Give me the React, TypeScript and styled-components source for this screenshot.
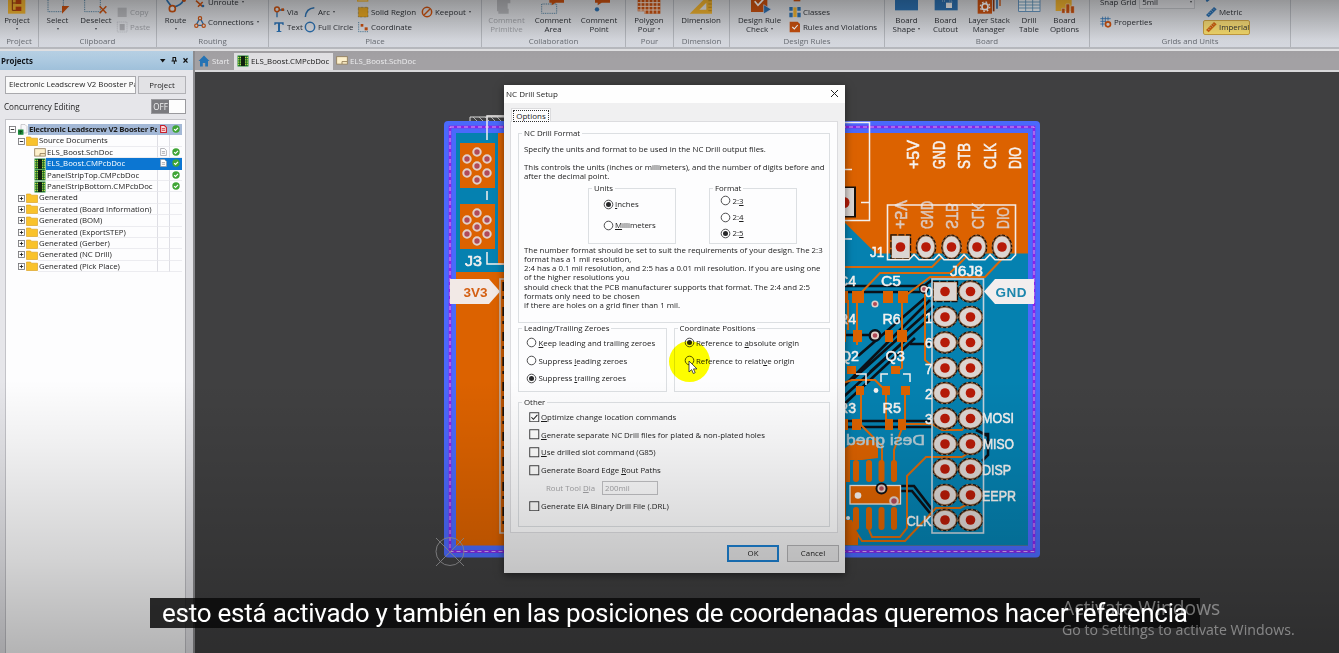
import React from "react";
import styled, { createGlobalStyle, css } from "styled-components";

const Global = createGlobalStyle`
  * { box-sizing: border-box; }
  html, body { margin: 0; padding: 0; overflow: hidden; background: #3a3a3a; }
  body { font-family: "Open Sans", "Noto Sans", sans-serif; font-size: 7.8px; color: #1c1c1c; }
  svg { display: block; flex: none; }
  u { text-underline-offset: 1px; text-decoration-thickness: 1px; }
`;

const Screen = styled.div`
  position: relative;
  display: flex;
  flex-direction: column;
  width: 1339px;
  height: 653px;
  overflow: hidden;
`;

/* ---------- ribbon ---------- */

const RibbonBar = styled.div`
  display: flex;
  height: 51px;
  flex: none;
  font-size: 7.9px;
  background: linear-gradient(#d6d7da 0, #d9dce3 47px, #b9bbc0 47px, #b9bbc0 49px, #e2e2e4 49px, #e2e2e4 51px);
`;

const Group = styled.div<{ $w: number }>`
  display: flex;
  flex-direction: column;
  width: ${(p) => p.$w}px;
  height: 47px;
  border-right: 1px solid #b3b6bc;
`;

const GroupBody = styled.div<{ $pad?: number }>`
  display: flex;
  align-items: flex-end;
  height: 35px;
  overflow: hidden;
  padding-left: ${(p) => p.$pad ?? 0}px;
`;

const GroupLabel = styled.div`
  height: 12px;
  line-height: 12px;
  text-align: center;
  color: #696d74;
  white-space: nowrap;
`;

const BigButton = styled.div<{ $w: number; $off?: boolean }>`
  display: flex;
  flex-direction: column;
  align-items: center;
  flex: none;
  width: ${(p) => p.$w}px;
  height: 35px;
  line-height: 9px;
  text-align: center;
  white-space: nowrap;
  color: ${(p) => (p.$off ? "#9b9da2" : "#2c2f34")};
  svg + span { margin-top: 2px; }
`;

const SmallColumn = styled.div<{ $w: number; $row?: number; $below?: number }>`
  display: flex;
  flex-direction: column;
  flex: none;
  width: ${(p) => p.$w}px;
  padding-bottom: ${(p) => p.$below ?? 0}px;
  > * { height: ${(p) => p.$row ?? 15.5}px; }
`;

const SmallItem = styled.div<{ $off?: boolean; $on?: boolean }>`
  display: flex;
  align-items: center;
  gap: 2px;
  flex: none;
  white-space: nowrap;
  color: ${(p) => (p.$off ? "#9b9da2" : "#2c2f34")};
  ${(p) =>
    p.$on &&
    css`
      width: 47px;
      margin-left: -2px;
      padding-left: 1px;
      border: 1px solid #c9a043;
      border-radius: 2px;
      background: linear-gradient(#f3d877, #f8dd6c);
    `}
`;

const Caret = styled.i`
  display: inline-block;
  width: 0;
  height: 0;
  margin-left: 3px;
  vertical-align: 2px;
  border: 1.7px solid transparent;
  border-top: 2px solid #44474c;
  border-bottom: 0;
`;

const CaretLine = styled(Caret)`
  display: block;
  margin: 3px 0 0;
`;

const SnapField = styled.div`
  display: flex;
  align-items: center;
  justify-content: space-between;
  width: 56px;
  height: 13px;
  margin-left: 1px;
  padding: 0 2px;
  border: 1px solid #bcbec3;
  background: #dcdde1;
`;

const Art = ({ children }: { children: React.ReactNode }) => (
  <svg width="28" height="14" viewBox="0 0 84 42">{children}</svg>
);
const Mini = ({ children }: { children: React.ReactNode }) => (
  <svg width="12" height="12" viewBox="0 0 36 36">{children}</svg>
);

const OR = "#c8500f";
const BL = "#2c6fae";
const YE = "#edb02f";

const Big = (p: { w: number; icon: React.ReactNode; a: string; b?: string; caret?: boolean; off?: boolean }) => (
  <BigButton $w={p.w} $off={p.off}>
    <Art>{p.icon}</Art>
    <span>{p.a}</span>
    {p.b ? <span>{p.b}{p.caret && <Caret />}</span> : <CaretLine />}
  </BigButton>
);

const Small = (p: { icon: React.ReactNode; text: string; caret?: boolean; off?: boolean; on?: boolean }) => (
  <SmallItem $off={p.off} $on={p.on}>
    <Mini>{p.icon}</Mini>
    <span>{p.text}{p.caret && <Caret />}</span>
  </SmallItem>
);

const dotted = { fill: "none", stroke: "#3f7396", strokeWidth: 2.6, strokeDasharray: "3 2.4" };

const Ruler = ({ c }: { c: string }) => (
  <g>
    <path d="M3 27 L27 3 L35 10 L11 34 Z" fill={c} />
    <path d="M9 23 l4 4 M14 18 l3 3 M19 13 l4 4 M24 8 l3 3" stroke="#eee" strokeWidth="1.6" />
  </g>
);

const Ribbon = () => (
  <RibbonBar>
    <Group $w={39}>
      <GroupBody>
        <Big w={34} a="Project" icon={<>
          <rect x="15" y="-10" width="52" height="51" fill={YE} />
          <path d="M28 0v31h12M28 9h12" fill="none" stroke="#8d3410" strokeWidth="3" />
          <rect x="38" y="0" width="17" height="12" fill="#b9420e" /><rect x="38" y="20" width="17" height="13" fill="#b9420e" />
        </>} />
      </GroupBody>
      <GroupLabel>Project</GroupLabel>
    </Group>
    <Group $w={118}>
      <GroupBody>
        <Big w={37} a="Select" icon={<>
          <path d="M12 0V35H58V0" {...dotted} /><path d="M54 18H76L54 41Z" fill={OR} />
        </>} />
        <Big w={40} a="Deselect" icon={<>
          <path d="M8 0V35H55V0" {...dotted} /><path d="M53 19L73 40M73 19L53 40" stroke={OR} strokeWidth="4.5" />
        </>} />
        <SmallColumn $w={38}>
          <Small off text="Copy" icon={<><rect x="5" y="5" width="27" height="28" fill="#b4b5b9" /></>} />
          <Small off text="Paste" icon={<><rect x="4" y="3" width="29" height="30" fill="none" stroke="#a9abb0" strokeWidth="2" strokeDasharray="3 3" /><rect x="11" y="9" width="15" height="19" fill="#aaabb0" /></>} />
        </SmallColumn>
      </GroupBody>
      <GroupLabel>Clipboard</GroupLabel>
    </Group>
    <Group $w={112}>
      <GroupBody>
        <Big w={37} a="Route" icon={<>
          <path d="M14 0L30 22Q60 16 64 0" fill="none" stroke={BL} strokeWidth="5" />
          <circle cx="31" cy="26" r="9" fill="#e5e6ea" stroke={OR} strokeWidth="5" /><circle cx="66" cy="0" r="6" fill={OR} />
        </>} />
        <SmallColumn $w={74} $row={20} $below={3}>
          <Small caret text="Unroute" icon={<><path d="M6 14L26 32M26 18L12 32" stroke={OR} strokeWidth="4.5" /><circle cx="27" cy="30" r="4" fill={BL} /></>} />
          <Small caret text="Connections" icon={<>
            <path d="M18 6L6 28H30Z" fill="none" stroke={BL} strokeWidth="4" />
            <circle cx="18" cy="7" r="5" fill="#ddd" stroke={OR} strokeWidth="3.5" /><circle cx="7" cy="29" r="5" fill="#ddd" stroke={OR} strokeWidth="3.5" /><circle cx="29" cy="29" r="5" fill="#ddd" stroke={OR} strokeWidth="3.5" />
          </>} />
        </SmallColumn>
      </GroupBody>
      <GroupLabel>Routing</GroupLabel>
    </Group>
    <Group $w={213}>
      <GroupBody $pad={4}>
        <SmallColumn $w={31}>
          <Small text="Via" icon={<><path d="M12 12V34M12 12H34" stroke={BL} strokeWidth="4" /><circle cx="12" cy="10" r="7" fill="#ddd" stroke={OR} strokeWidth="4.5" /><rect x="25" y="7" width="8" height="8" fill={OR} /></>} />
          <Small text="Text" icon={<path d="M4 4H32V12H29L27 8H21V30H25V33H11V30H15V8H9L7 12H4Z" fill={BL} />} />
        </SmallColumn>
        <SmallColumn $w={53}>
          <Small caret text="Arc" icon={<path d="M4 33Q6 7 31 5" fill="none" stroke={BL} strokeWidth="4.5" />} />
          <Small text="Full Circle" icon={<circle cx="18" cy="18" r="14" fill="none" stroke={BL} strokeWidth="4.5" />} />
        </SmallColumn>
        <SmallColumn $w={64}>
          <Small text="" icon={<rect x="2" y="12" width="30" height="21" fill="#f1ead8" stroke={YE} strokeWidth="4" />} />
          <Small text="Solid Region" icon={<rect x="4" y="4" width="29" height="29" fill="#e5a623" stroke="#6a5a2b" strokeWidth="2" strokeDasharray="2 2" />} />
          <Small text="Coordinate" icon={<><path d="M5 3V32H34" {...dotted} /><rect x="11" y="9" width="8" height="8" fill={OR} /><rect x="23" y="19" width="9" height="9" fill={OR} /></>} />
        </SmallColumn>
        <SmallColumn $w={58}>
          <Small caret text="Keepout" icon={<><circle cx="18" cy="18" r="14" fill="none" stroke={OR} strokeWidth="4.5" /><path d="M9 27L27 9" stroke={OR} strokeWidth="4.5" /></>} />
          <SmallItem />
        </SmallColumn>
      </GroupBody>
      <GroupLabel>Place</GroupLabel>
    </Group>
    <Group $w={144}>
      <GroupBody>
        <Big off w={49} a="Comment" b="Primitive" icon={<path d="M12 0H52V10H44V26H47V41H16V34H12Z" fill="#b0b1b5" />} />
        <Big w={44} a="Comment" b="Area" icon={<><path d="M8 12V40H53V12H8" {...dotted} /><path d="M31 0H75V8H50L38 16V8H31Z" fill={OR} /></>} />
        <Big w={48} a="Comment" b="Point" icon={<><path d="M30 0H75V8H50L38 16V8H30Z" fill={OR} /><circle cx="36" cy="28" r="6.5" fill={BL} /></>} />
      </GroupBody>
      <GroupLabel>Collaboration</GroupLabel>
    </Group>
    <Group $w={48}>
      <GroupBody>
        <Big caret w={46} a="Polygon" b="Pour" icon={<>
          <path d="M8 -5H76V41H28V34H8Z" fill={OR} />
          <path d="M8 8H76M8 19H76M8 30H76M18 0V34M30 0V41M42 0V41M54 0V41M66 0V41" stroke="#f4dccc" strokeWidth="3" />
        </>} />
      </GroupBody>
      <GroupLabel>Pour</GroupLabel>
    </Group>
    <Group $w={56}>
      <GroupBody>
        <Big w={54} a="Dimension" icon={<>
          <path d="M8 41L75 -26V41Z" fill={YE} /><path d="M37 29L58 8V29Z" fill="#e4e4e6" />
          <path d="M64 2h10M64 12h10M64 22h10M64 32h10" stroke="#a87818" strokeWidth="2" />
        </>} />
      </GroupBody>
      <GroupLabel>Dimension</GroupLabel>
    </Group>
    <Group $w={155}>
      <GroupBody>
        <Big caret w={59} a="Design Rule" b="Check" icon={<>
          <rect x="15" y="-5" width="49" height="41" fill={OR} /><path d="M26 4L36 16L54 -4" fill="none" stroke="#fff" strokeWidth="5" />
          <path d="M53 14L76 28L53 42Z" fill={BL} stroke="#dde" strokeWidth="2" />
        </>} />
        <SmallColumn $w={90}>
          <SmallItem><Mini><rect x="14" y="14" width="20" height="20" fill={OR} /></Mini></SmallItem>
          <Small text="Classes" icon={<><path d="M1 3H11V14H1ZM1 20H11V34H1ZM25 3H35V14H25ZM25 20H35V34H25Z" fill={BL} /><rect x="13" y="4" width="10" height="29" fill={YE} /></>} />
          <Small text="Rules and Violations" icon={<><path d="M2 2H26L33 9V34H2Z" fill={OR} /><path d="M10 18L16 24L26 12" fill="none" stroke="#fff" strokeWidth="3.5" /></>} />
        </SmallColumn>
      </GroupBody>
      <GroupLabel>Design Rules</GroupLabel>
    </Group>
    <Group $w={205}>
      <GroupBody $pad={1}>
        <Big caret w={41} a="Board" b="Shape" icon={<rect x="6" y="-5" width="69" height="36" fill={BL} />} />
        <Big w={37} a="Board" b="Cutout" icon={<><rect x="8" y="-5" width="69" height="36" fill={BL} /><path d="M42 8H60V24H42Z" fill="#eee" /><path d="M30 3H40M52 3H60V8" stroke="#eee" strokeWidth="2" strokeDasharray="3 3" fill="none" /></>} />
        <Big w={50} a="Layer Stack" b="Manager" icon={<>
          <rect x="8" y="-5" width="43" height="46" fill={OR} /><circle cx="30" cy="20" r="9" fill="none" stroke="#fff" strokeWidth="5" /><circle cx="30" cy="20" r="14" fill="none" stroke="#fff" strokeWidth="4" strokeDasharray="5 6" />
          <path d="M56 0V34" stroke="#8d3410" strokeWidth="5" /><path d="M66 0V26" stroke={BL} strokeWidth="5" /><path d="M75 0V18" stroke={OR} strokeWidth="4" />
        </>} />
        <Big w={30} a="Drill" b="Table" icon={<>
          <rect x="11" y="-5" width="64" height="39" fill="#eef3f7" stroke={BL} strokeWidth="2" /><path d="M11 6H75M11 15H75M11 24H75M32 0V34M53 0V34" stroke="#5d93b8" strokeWidth="2.5" />
        </>} />
        <Big w={41} a="Board" b="Options" icon={<>
          <path d="M14 -5H62V33H14Z" fill={YE} /><path d="M32 40V25H42V40ZM45 40V12H56V40ZM59 40V18H70V40Z" fill={OR} stroke="#eee" strokeWidth="1.5" />
        </>} />
      </GroupBody>
      <GroupLabel>Board</GroupLabel>
    </Group>
    <Group $w={201}>
      <GroupBody $pad={10}>
        <SmallColumn $w={105} $row={20} $below={3}>
          <SmallItem><span>Snap Grid</span><SnapField>5mil<Caret /></SnapField></SmallItem>
          <Small text="Properties" icon={<><path d="M8 2V32M16 2V20M24 2V14M1 8H32M1 16H18M1 24H14" stroke={BL} strokeWidth="2.4" /><circle cx="24" cy="25" r="7.5" fill="#ddd" stroke={OR} strokeWidth="5" /></>} />
        </SmallColumn>
        <SmallColumn $w={60}>
          <SmallItem><Mini><path d="M4 34L14 26" stroke={BL} strokeWidth="6" /></Mini></SmallItem>
          <Small text="Metric" icon={<Ruler c={BL} />} />
          <Small on text="Imperial" icon={<Ruler c="#d2640f" />} />
        </SmallColumn>
      </GroupBody>
      <GroupLabel>Grids and Units</GroupLabel>
    </Group>
  </RibbonBar>
);

/* ---------- projects panel ---------- */

const Workspace = styled.div`
  display: flex;
  flex: 1;
  min-height: 0;
`;

const Panel = styled.div`
  display: flex;
  flex-direction: column;
  width: 195px;
  flex: none;
  background: #e6e6ea;
  border-right: 2px solid #8d8d90;
`;

const PanelHead = styled.div`
  display: flex;
  align-items: center;
  height: 19px;
  flex: none;
  padding: 0 3px 0 1px;
  background: linear-gradient(#b9d2e6, #9fc0da);
  font-weight: 700;
  font-size: 7.9px;
  color: #10151c;
  svg { margin-left: auto; }
`;

const PickRow = styled.div`
  display: flex;
  justify-content: space-between;
  margin: 6px 7px 0 5px;
`;

const PickField = styled.div`
  width: 131px;
  height: 18px;
  padding-left: 3px;
  border: 1px solid #a9a9ad;
  background: #fafafa;
  line-height: 15px;
  white-space: nowrap;
  overflow: hidden;
`;

const PickButton = styled.div`
  width: 48px;
  height: 18px;
  border: 1px solid #b2b2b6;
  background: #e2e2e5;
  line-height: 16px;
  text-align: center;
`;

const ToggleRow = styled.div`
  display: flex;
  align-items: center;
  justify-content: space-between;
  height: 15px;
  margin: 5px 7px 0 4px;
  font-size: 8.1px;
`;

const Toggle = styled.div`
  display: flex;
  width: 35px;
  height: 15px;
  border: 1px solid #9a9a9e;
  background: #fdfdfd;
  span { width: 17px; background: #7b7b7f; color: #f2f2f2; text-align: center; line-height: 13px; }
`;

const Tree = styled.div`
  flex: 1;
  margin: 5px 7px 0 5px;
  padding: 4px 3px 0 2px;
  border: 1px solid #c3c3c8;
  border-bottom: 0;
  background: #fdfdfe;
`;

const TreeRow = styled.div<{ $indent: number }>`
  display: flex;
  align-items: center;
  height: 11.4px;
  padding-left: ${(p) => p.$indent}px;
  white-space: nowrap;
`;

const TreeName = styled.div<{ $tone?: "root" | "selected" }>`
  flex: 1;
  min-width: 0;
  height: 100%;
  line-height: 11px;
  padding-left: 1px;
  overflow: hidden;
  border-bottom: 1px solid #ececf0;
  ${(p) => p.$tone === "root" && css`background: #a3b8d6; font-weight: 700; letter-spacing: -0.22px; border-color: #a3b8d6;`}
  ${(p) => p.$tone === "selected" && css`background: #0c76d2; color: #fff; border-color: #0c76d2;`}
`;

const TreeCell = styled.div<{ $tone?: "root" | "selected" }>`
  display: flex;
  align-items: center;
  justify-content: center;
  width: 12.6px;
  height: 100%;
  flex: none;
  border-left: 1px solid #dedee4;
  border-bottom: 1px solid #ececf0;
  ${(p) => p.$tone === "root" && css`background: #a3b8d6; border-color: #a3b8d6;`}
  ${(p) => p.$tone === "selected" && css`background: #0c76d2; border-color: #0c76d2;`}
`;

const Expander = ({ open }: { open?: boolean }) => (
  <svg width="9" height="9" viewBox="0 0 9 9">
    <rect x="1.5" y="1.5" width="6" height="6" fill="#fff" stroke="#6e6e72" strokeWidth=".8" />
    <path d={open ? "M2.8 4.5h3.4" : "M2.8 4.5h3.4M4.5 2.8v3.4"} stroke="#222" strokeWidth=".9" />
  </svg>
);
const Folder = () => (
  <svg width="12" height="10" viewBox="0 0 12 10"><path d="M.5 1H4.5L5.5 2.2H11.5V9.5H.5Z" fill="#f9c22b" stroke="#d69a18" strokeWidth=".6" /></svg>
);
const PcbIcon = () => (
  <svg width="12" height="12" viewBox="0 0 12 12">
    <rect x=".5" y=".5" width="11" height="11" fill="#2a8a35" />
    <path d="M1 2.5H11M1 4.8H11M1 7.1H11M1 9.4H11" stroke="#cde04a" strokeWidth="1" />
    <path d="M2.6 1V11M9.4 1V11" stroke="#14501c" strokeWidth=".7" /><rect x="4" y="1" width="4" height="10" fill="#10200f" />
  </svg>
);
const SchIcon = () => (
  <svg width="12" height="9" viewBox="0 0 12 9"><rect x=".7" y=".7" width="10.6" height="7.4" fill="#fdf0cb" stroke="#8f7b55" strokeWidth=".8" /><path d="M6 8V5.6H11" fill="none" stroke="#8f7b55" strokeWidth=".9" /></svg>
);
const RootIcon = () => (
  <svg width="11" height="11" viewBox="0 0 11 11"><path d="M4 .5H8L10 2.5V9H4Z" fill="#f7f7f9" stroke="#b0b0b5" strokeWidth=".6" /><path d="M1 5.5H6.5V10.8H1Z" fill="#1d8a3c" /><path d="M3.7 10V7M2.3 8.2L3.7 6.6L5.2 8.2" stroke="#083b14" fill="none" strokeWidth=".8" /></svg>
);
const Tick = () => (
  <svg width="8" height="8" viewBox="0 0 8 8"><circle cx="4" cy="4" r="3.7" fill="#3fa535" /><path d="M2.1 4.1L3.5 5.4L6 2.8" fill="none" stroke="#fff" strokeWidth="1.1" /></svg>
);
const Doc = ({ red }: { red?: boolean }) => (
  <svg width="7" height="8" viewBox="0 0 7 8"><path d="M.6 .5H4.4L6.4 2.4V7.5H.6Z" fill={red ? "#fbdcdc" : "#fff"} stroke={red ? "#c8202c" : "#9a9aa0"} strokeWidth={red ? 1.1 : 0.7} /><path d="M1.9 3.6H5M1.9 5.3H5" stroke={red ? "#c8202c" : "#9a9aa0"} strokeWidth=".8" /></svg>
);

type Node = { text: string; kind: "root" | "folder" | "sch" | "pcb"; indent: number; open?: boolean; doc?: boolean; tick?: boolean; tone?: "root" | "selected" };
const nodes: Node[] = [
  { text: "Electronic Leadscrew V2 Booster Pack", kind: "root", indent: 0, open: true, doc: true, tick: true, tone: "root" },
  { text: "Source Documents", kind: "folder", indent: 9, open: true },
  { text: "ELS_Boost.SchDoc", kind: "sch", indent: 26, doc: true, tick: true },
  { text: "ELS_Boost.CMPcbDoc", kind: "pcb", indent: 26, doc: true, tick: true, tone: "selected" },
  { text: "PanelStripTop.CMPcbDoc", kind: "pcb", indent: 26, tick: true },
  { text: "PanelStripBottom.CMPcbDoc", kind: "pcb", indent: 26, tick: true },
  ...["", " (Board Information)", " (BOM)", " (ExportSTEP)", " (Gerber)", " (NC Drill)", " (Pick Place)"].map(
    (s): Node => ({ text: "Generated" + s, kind: "folder", indent: 9 })
  ),
];

const Projects = () => (
  <Panel>
    <PanelHead>
      Projects
      <svg width="31" height="9" viewBox="0 0 31 9">
        <path d="M1 3H6.5L3.7 6.5Z" fill="#111" />
        <path d="M13.5 1.5H17M14 1.5V5M16.6 1.5V5M12.5 5H18M15.3 5V8" stroke="#111" strokeWidth="1.1" fill="none" />
        <path d="M24.5 2.2L28.5 6.6M28.5 2.2L24.5 6.6" stroke="#111" strokeWidth="1.3" />
      </svg>
    </PanelHead>
    <PickRow>
      <PickField>Electronic Leadscrew V2 Booster Pack</PickField>
      <PickButton>Project</PickButton>
    </PickRow>
    <ToggleRow>
      Concurrency Editing
      <Toggle><span>OFF</span></Toggle>
    </ToggleRow>
    <Tree>
      {nodes.map((n) => (
        <TreeRow key={n.text} $indent={n.indent}>
          {(n.kind === "root" || n.kind === "folder") && <Expander open={n.open} />}
          {n.kind === "root" && <RootIcon />}
          {n.kind === "folder" && <Folder />}
          {n.kind === "sch" && <SchIcon />}
          {n.kind === "pcb" && <PcbIcon />}
          <TreeName $tone={n.tone}>{n.text}</TreeName>
          <TreeCell $tone={n.tone}>{n.doc && <Doc red={n.kind === "root"} />}</TreeCell>
          <TreeCell $tone={n.tone}>{n.tick && <Tick />}</TreeCell>
        </TreeRow>
      ))}
    </Tree>
  </Panel>
);

/* ---------- editor ---------- */

const Editor = styled.div`
  display: flex;
  flex-direction: column;
  flex: 1;
  min-width: 0;
`;

const DocTabs = styled.div`
  display: flex;
  height: 21px;
  flex: none;
  padding-top: 2px;
  background: #a3a1a4;
  border-bottom: 2px solid #d8d8da;
`;

const DocTab = styled.div<{ $active?: boolean; $w: number }>`
  display: flex;
  align-items: center;
  gap: 2px;
  width: ${(p) => p.$w}px;
  padding: 0 0 2px 3px;
  white-space: nowrap;
  background: ${(p) => (p.$active ? "#e1e0e3" : "transparent")};
  color: ${(p) => (p.$active ? "#151515" : "#ececee")};
`;

const Canvas = styled.div`
  position: relative;
  flex: 1;
  background: #404041;
  overflow: hidden;
`;

const ORG = "#dc6200";
const TEAL = "#0581b0";
const PAD = "#dbd5d2";
const RED = "#b61a08";

const OvalPad = ({ x, y, rx, ry }: { x: number; y: number; rx: number; ry: number }) => (
  <g>
    <ellipse cx={x} cy={y} rx={rx + 1} ry={ry + 1} fill="#17100c" />
    <ellipse cx={x} cy={y} rx={rx + 0.6} ry={ry + 0.6} fill="none" stroke="#d9a070" strokeWidth=".8" strokeDasharray="2 3" />
    <ellipse cx={x} cy={y} rx={rx - 0.5} ry={ry - 0.5} fill={PAD} stroke="#a56a3c" strokeWidth=".7" />
    <circle cx={x} cy={y} r="4.8" fill={RED} />
  </g>
);

const SquarePad = ({ x, y, w, h, cx, cy }: { x: number; y: number; w: number; h: number; cx: number; cy: number }) => (
  <g>
    <rect x={x} y={y} width={w} height={h} fill={PAD} stroke="#b06a34" strokeWidth=".8" />
    <rect x={x - 0.6} y={y - 0.6} width={w + 1.2} height={h + 1.2} fill="none" stroke="#17100c" strokeWidth="1.2" strokeDasharray="6 1.5" />
    <circle cx={cx} cy={cy} r="4.8" fill={RED} />
  </g>
);

const ViaDot = ({ x, y, r = 3.6 }: { x: number; y: number; r?: number }) => (
  <circle cx={x} cy={y} r={r} fill="#b04a58" stroke="#e2cfc8" strokeWidth={r * 0.55} />
);

const Silk = ({ x, y, w, children, fill = "#f6f2f0", size = 15 }: { x: number; y: number; w: number; children: string; fill?: string; size?: number }) => (
  <text x={x} y={y} textLength={w} lengthAdjust="spacingAndGlyphs" fontSize={size} fill={fill} stroke={fill} strokeWidth=".5">{children}</text>
);

const pinY = [291.5, 317, 342.5, 368, 393, 418.5, 444, 469, 495, 520];
const j1 = [900.5, 926, 951.5, 977, 1002];
const j1Names: [string, number][] = [["+5V", 29], ["GND", 28], ["STB", 26], ["CLK", 26], ["DIO", 22]];

const Board = () => (
  <svg width="1144" height="581" viewBox="195 72 1144 581" fontFamily='"Liberation Sans", Arial, sans-serif'>
    <rect x="444" y="121" width="596" height="436.5" rx="4" fill="#4a69fb" />
    <rect x="450" y="127" width="584" height="424.5" fill="none" stroke="#8a23e6" strokeWidth="2.6" />
    <rect x="450" y="127" width="584" height="424.5" fill="none" stroke="#d0a8f4" strokeWidth="1" strokeDasharray="4 3" />
    <rect x="456" y="133" width="572" height="412.5" fill={ORG} />
    <g>
      <path d="M456 133H498V265H510V272H456Z" fill={TEAL} />
      <path d="M460 143H495V188H460ZM460 204H495V249H460Z" fill={ORG} />
      {[0, 61].map((d) => [[477, 152], [467, 159], [487, 159], [477, 166], [467, 173], [487, 173], [477, 180]].map(([x, y]) => (
        <ViaDot key={`${x}-${y}-${d}`} x={x} y={y + d} r={3.7} />
      )))}
      <path d="M487 140V116H510M487 191V200M487 252V264H510" fill="none" stroke="#f3f0ee" strokeWidth="1.5" />
      <path d="M470 121V117H505" fill="none" stroke="#d8d8d8" strokeWidth="1" />
      <path d="M473 117L477 121M479 117L483 121M485 117L489 121M491 117L495 121M497 117L501 121" stroke="#c8c8c8" strokeWidth=".8" />
      <Silk x={465} y={265.5} w={17}>J3</Silk>
      <path d="M450 279H489L500 291.5L489 304H450Z" fill="#f2e9e6" />
      <text x="463.5" y="296.5" textLength="24" fontSize="13.5" fontWeight="700" fill="#d45f12">3V3</text>
      <path d="M508 279H500V533H508" fill="none" stroke="#c9bdb6" strokeWidth="1.6" />
      <path d="M503.2 282V530" stroke="#1b130e" strokeWidth="1.6" strokeDasharray="9 5 3 8" />
    </g>
    <g>
      <path d="M840 218L876 253.5H1028V545.5H840Z" fill={TEAL} />
      <path d="M840 122.5H869.5V220.5H840M861 202.5H869M840 169.5H852M840 239H852" fill="none" stroke="#f3f0ee" strokeWidth="1.5" />
      <rect x="838" y="186.5" width="18" height="31" fill="#17100c" /><rect x="838" y="188" width="16" height="28" fill={PAD} /><circle cx="844" cy="202.5" r="5.5" fill={RED} />

      <g fill="none" stroke="#0b1118" strokeWidth="2.6">
        <path d="M840 286H924L932 280M840 292H920M840 335H875M910 344H933M908 338L840 400M915 338L840 408M930 300L840 390M934 306L852 380M934 314L870 372M925 298L858 356" />
        <path d="M840 421H932M840 427H932M900 486H914L934 512M900 491H912L934 518M984 434H988V455L982 461M976 430L988 436" />
      </g>
      <g fill="none" stroke="#d9690c" strokeWidth="2">
        <path d="M840 267H932L942 257M858 296L880 273H950L966 257M905 296L930 277H985L1002 259" />
        <path d="M857 300V345M902 300V368L895 372M925 288V360L932 366M861 390V425L882 446V462M905 395V420L894 450V462M886 390V420M840 384L852 380H875L886 391M848 300V330" />
        <path d="M900 424H932L942 430H962L968 422M970 452L962 457H926L907 476V528L900 537H872L869 530M970 503L960 508H936L905 541H862L856 532" />
      </g>
      <g fill={ORG}>
        <path d="M852 291H864V303H852ZM883 291H893V303H883ZM898 291H908V303H898ZM840 291H848V303H840ZM853 330H862V342H853ZM885 330H893V342H885ZM897 330H907V342H897ZM840 330H846V342H840Z" />
        <path d="M891 366H900V374H891ZM847 366H856V374H847ZM856 386H864V395H856ZM882 386H890V395H882ZM901 386H910V395H901ZM885 419H893V430H885ZM898 419H906V430H898ZM852 419H861V430H852ZM840 419H848V430H840Z" />
        <path d="M840 452L856 440H874L878 446V458L862 460H850V482H840ZM840 520H852L858 534V545H840ZM840 452H846V545H840Z" />
        <rect x="850" y="485" width="50" height="19" />
        {[856, 869, 881.5, 894].map((x) => <g key={x}><rect x={x - 3} y="460" width="6" height="22" rx="3" /><rect x={x - 3} y="507" width="6" height="23" rx="3" /></g>)}
      </g>
      <rect x="850" y="485.5" width="50.5" height="18.5" fill="none" stroke="#efe6e0" strokeWidth="1.3" />
      <circle cx="858" cy="495.5" r="3.3" fill="#f6f2f0" />
      <circle cx="876" cy="390.5" r="2.4" fill="#f6f2f0" />
      <circle cx="848" cy="518" r="2" fill="#f6f2f0" />
      <circle cx="875" cy="335.5" r="6.5" fill="#0b1118" /><circle cx="881.5" cy="488.5" r="6" fill="#0b1118" /><circle cx="924" cy="289" r="5" fill="#0b1118" />
      <ViaDot x={875} y={304} r={2.8} /><ViaDot x={875} y={335.5} r={3.2} /><ViaDot x={924} y={289} r={2.8} /><ViaDot x={881.5} y={488.5} r={3.2} /><ViaDot x={894} y={501} r={3.8} />
      <path d="M881 382V374H888M903 374H910V382M856 374H866V385" fill="none" stroke="#f3f0ee" strokeWidth="1.5" />

      {j1Names.map(([t, w], i) => (
        <g key={t}>
          <g transform={`translate(${j1[i] + 18.5} 169) rotate(-90)`}><Silk x={0} y={0} w={w} size={16}>{t}</Silk></g>
          <g transform={`translate(${j1[i] - 5.5} 229) scale(-1 1) rotate(-90)`}><Silk x={0} y={0} w={w} size={16} fill="#dcc9bf">{t}</Silk></g>
        </g>
      ))}
      <SquarePad x={891.5} y={235.5} w={18.5} h={23} cx={900.5} cy={247} />
      {j1.slice(1).map((x) => <OvalPad key={x} x={x} y={247} rx={9.3} ry={11.6} />)}
      <path d="M887.5 205H1015.5V255L1011 259.8H995L990 254.5L985 259.8H969L964 254.5L959 259.8H944L939 254.5L934 259.8H919L914 254.5L909 259.8H887.5Z" fill="none" stroke="#f3ece8" strokeWidth="1.6" />

      {pinY.map((y, i) => (
        <g key={y}>
          {i > 0 && <OvalPad x={945} y={y} rx={11.8} ry={10.2} />}
          <OvalPad x={970.5} y={y} rx={11.8} ry={10.2} />
        </g>
      ))}
      <SquarePad x={933.5} y={282} w={23.5} h={19} cx={945} cy={291.5} />
      <rect x="932" y="279" width="51.5" height="254" fill="none" stroke="#c3d2dc" strokeWidth="1.6" />

      <Silk x={870} y={257} w={14}>J1</Silk>
      <Silk x={950} y={276} w={33}>J6J8</Silk>
      <Silk x={881} y={286} w={20}>C5</Silk><Silk x={838} y={286} w={18}>C4</Silk>
      <Silk x={882.5} y={324} w={18}>R6</Silk><Silk x={838} y={324} w={18}>R4</Silk>
      <Silk x={885.5} y={361} w={19.5}>Q3</Silk><Silk x={840} y={361} w={19}>Q2</Silk>
      <Silk x={882.5} y={413} w={18.5}>R5</Silk><Silk x={838} y={413} w={18}>R3</Silk>
      {["0", "1", "6", "7", "2", "3"].map((t, i) => <Silk key={t} x={925} y={pinY[i] + 5.5} w={7.5}>{t}</Silk>)}
      <Silk x={906.5} y={525.5} w={25}>CLK</Silk>
      <Silk x={982} y={423} w={32}>MOSI</Silk><Silk x={983} y={448.5} w={31}>MISO</Silk>
      <Silk x={982} y={474.5} w={29}>DISP</Silk><Silk x={982} y={500.5} w={34}>EEPR</Silk>
      <g transform="translate(925 444.5) scale(-1 1)"><Silk x={0} y={0} w={79} fill="#b5cbd4">Desi gned</Silk></g>
      <path d="M984 291.5L995 279H1034V304H995Z" fill="#f2eeee" />
      <text x="995.5" y="296.5" textLength="31" fontSize="13.5" fontWeight="700" fill="#1c86ad">GND</text>
    </g>
    <g fill="none" stroke="#9a9a9c" strokeWidth=".9"><circle cx="450" cy="551.5" r="14" /><path d="M436 538L464 566M464 538L436 566" /></g>
  </svg>
);

/* ---------- dialog ---------- */

const Dialog = styled.div`
  position: absolute;
  left: 309px;
  top: 13px;
  width: 341px;
  height: 488px;
  display: flex;
  flex-direction: column;
  background: #f0f0f1;
  box-shadow: 0 2px 8px rgba(0, 0, 0, 0.5);
  font-size: 7.85px;
`;

const TitleBar = styled.div`
  display: flex;
  align-items: center;
  justify-content: space-between;
  height: 18px;
  padding: 0 6px 2px 2px;
  background: #fefefe;
  font-size: 8px;
`;

const Tab = styled.div`
  width: 40px;
  height: 14px;
  margin: 5px 0 -1px 7px;
  padding: 1px 1px 0;
  background: #fdfdfe;
  border: 1px solid #dcdcde;
  border-bottom: 0;
  z-index: 1;
  span { display: block; height: 12px; border: 1px dotted #333; line-height: 10px; text-align: center; font-size: 8px; }
`;

const Page = styled.div`
  display: flex;
  flex-direction: column;
  height: 412px;
  margin: 0 7px 0 6px;
  padding: 11px 7px 0;
  border: 1px solid #dcdcdf;
  background: #fdfdfe;
`;

const Box = styled.div<{ $h: number; $w?: number }>`
  display: flex;
  flex-direction: column;
  height: ${(p) => p.$h}px;
  width: ${(p) => (p.$w ? `${p.$w}px` : "auto")};
  border: 1px solid #dcdfe2;
`;

const Legend = styled.div`
  align-self: flex-start;
  height: 9px;
  margin: -5px 0 0 3px;
  padding: 0 2px;
  line-height: 9px;
  background: #fdfdfe;
  white-space: nowrap;
`;

const Para = styled.div<{ $top: number }>`
  margin: ${(p) => p.$top}px 0 0 5px;
  line-height: 9.2px;
  white-space: nowrap;
`;

const Pair = styled.div<{ $top: number; $left?: number; $gap: number }>`
  display: flex;
  gap: ${(p) => p.$gap}px;
  margin: ${(p) => p.$top}px 0 0 ${(p) => p.$left ?? 0}px;
`;

const Choices = styled.div<{ $top: number; $left: number; $step: number }>`
  display: flex;
  flex-direction: column;
  padding: ${(p) => p.$top}px 0 0 ${(p) => p.$left}px;
  > * { height: ${(p) => p.$step}px; }
`;

const Choice = styled.div`
  display: flex;
  align-items: center;
  gap: 1.5px;
  white-space: nowrap;
`;

const RoutRow = styled.div`
  display: flex;
  align-items: center;
  gap: 7px;
  padding-left: 17px;
  color: #a5a5a8;
`;

const RoutField = styled.div`
  width: 56px;
  height: 14px;
  padding-left: 2px;
  line-height: 12px;
  border: 1px solid #c2c2c5;
`;

const Actions = styled.div`
  display: flex;
  justify-content: flex-end;
  gap: 8px;
  margin: 12px 6px 0 0;
`;

const Action = styled.div<{ $main?: boolean }>`
  width: 52px;
  height: 17px;
  line-height: ${(p) => (p.$main ? 13 : 15)}px;
  text-align: center;
  background: #e3e3e4;
  border: ${(p) => (p.$main ? "2px solid #1c80d0" : "1px solid #b0b0b2")};
`;

const Spot = styled.div`
  position: absolute;
  left: 165px;
  top: 256px;
  width: 41px;
  height: 41px;
  border-radius: 50%;
  background: #ffff00;
  mix-blend-mode: multiply;
`;

const Pointer = styled.svg`
  position: absolute;
  left: 184px;
  top: 275px;
`;

const Radio = ({ on, children }: { on?: boolean; children: React.ReactNode }) => (
  <Choice>
    <svg width="11" height="11" viewBox="0 0 11 11"><circle cx="5.5" cy="5.5" r="4.3" fill="#fff" stroke="#3a3a3c" strokeWidth=".9" />{on && <circle cx="5.5" cy="5.5" r="2.5" fill="#28282a" />}</svg>
    <span>{children}</span>
  </Choice>
);
const Check = ({ on, children }: { on?: boolean; children: React.ReactNode }) => (
  <Choice>
    <svg width="10.5" height="10.5" viewBox="0 0 10 10"><rect x=".7" y=".7" width="8.6" height="8.6" fill="#fff" stroke="#3a3a3c" strokeWidth=".9" />{on && <path d="M2.3 5L4.2 7L8 2.800" fill="none" stroke="#222" strokeWidth="1" />}</svg>
    <span>{children}</span>
  </Choice>
);

const DrillDialog = () => (
  <Dialog>
    <TitleBar>
      NC Drill Setup
      <svg width="9" height="9" viewBox="0 0 9 9"><path d="M1 1L8 8M8 1L1 8" stroke="#222" strokeWidth="1" /></svg>
    </TitleBar>
    <Tab><span>Options</span></Tab>
    <Page>
      <Box $h={190}>
        <Legend>NC Drill Format</Legend>
        <Para $top={6.5}>Specify the units and format to be used in the NC Drill output files.</Para>
        <Para $top={9.2}>This controls the units (inches or millimeters), and the number of digits before and<br />after the decimal point.</Para>
        <Pair $top={6.5} $left={69} $gap={33}>
          <Box $h={56} $w={88}>
            <Legend>Units</Legend>
            <Choices $top={1} $left={13.500} $step={21}>
              <Radio on><u>I</u>nches</Radio>
              <Radio><u>M</u>illimeters</Radio>
            </Choices>
          </Box>
          <Box $h={56} $w={88}>
            <Legend>Format</Legend>
            <Choices $top={0} $left={10} $step={16.2}>
              <Radio>2:<u>3</u></Radio>
              <Radio>2:<u>4</u></Radio>
              <Radio on>2:<u>5</u></Radio>
            </Choices>
          </Box>
        </Pair>
        <Para $top={2}>
          The number format should be set to suit the requirements of your design. The 2:3<br />
          format has a 1 mil resolution,<br />
          2:4 has a 0.1 mil resolution, and 2:5 has a 0.01 mil resolution. If you are using one<br />
          of the higher resolutions you<br />
          should check that the PCB manufacturer supports that format. The 2:4 and 2:5<br />
          formats only need to be chosen<br />
          if there are holes on a grid finer than 1 mil.
        </Para>
      </Box>
      <Pair $top={5} $gap={7}>
        <Box $h={64} $w={149}>
          <Legend>Leading/Trailing Zeroes</Legend>
          <Choices $top={1} $left={7} $step={17.8}>
            <Radio><u>K</u>eep leading and trailing zeroes</Radio>
            <Radio>Suppress <u>l</u>eading zeroes</Radio>
            <Radio on>Suppress <u>t</u>railing zeroes</Radio>
          </Choices>
        </Box>
        <Box $h={64} $w={157}>
          <Legend>Coordinate Positions</Legend>
          <Choices $top={1} $left={9} $step={17.8}>
            <Radio on>Reference to <u>a</u>bsolute origin</Radio>
            <Radio>Reference to relati<u>v</u>e origin</Radio>
          </Choices>
        </Box>
      </Pair>
      <Pair $top={10} $gap={0}>
        <Box $h={125} $w={313}>
          <Legend>Other</Legend>
          <Choices $top={1} $left={10} $step={17.8}>
            <Check on><u>O</u>ptimize change location commands</Check>
            <Check><u>G</u>enerate separate NC Drill files for plated &amp; non-plated holes</Check>
            <Check><u>U</u>se drilled slot command (G85)</Check>
            <Check>Generate Board Edge <u>R</u>out Paths</Check>
            <RoutRow><span>Rout Tool <u>D</u>ia</span><RoutField>200mil</RoutField></RoutRow>
            <Check>Generate EIA Binary Drill File (.DRL)</Check>
          </Choices>
        </Box>
      </Pair>
    </Page>
    <Actions>
      <Action $main>OK</Action>
      <Action>Cancel</Action>
    </Actions>
    <Spot />
    <Pointer width="10" height="15" viewBox="0 0 10 15"><path d="M1 1V12L3.6 9.6L5.3 13.5L7.2 12.7L5.5 8.9H9Z" fill="#fff" stroke="#222" strokeWidth=".8" /></Pointer>
  </Dialog>
);

/* ---------- video overlays ---------- */

const Shade = styled.div`
  position: absolute;
  inset: 0;
  pointer-events: none;
  background:
    linear-gradient(rgba(0, 0, 0, 0.3), rgba(0, 0, 0, 0.03) 40px, transparent 60px),
    linear-gradient(transparent 380px, rgba(0, 0, 0, 0.06) 450px, rgba(0, 0, 0, 0.17) 560px, rgba(0, 0, 0, 0.29) 653px);
`;

const Subtitle = styled.div`
  position: absolute;
  left: 150px;
  top: 598px;
  width: 1050px;
  height: 30px;
  padding-left: 12px;
  line-height: 30px;
  background: rgba(8, 8, 8, 0.84);
  color: #fff;
  font-family: Roboto, sans-serif;
  font-size: 26px;
  letter-spacing: -0.24px;
  white-space: nowrap;
`;

const Activation = styled.div`
  position: absolute;
  left: 1062px;
  top: 595px;
  color: rgba(255, 255, 255, 0.42);
  font-size: 14.1px;
  line-height: 20px;
  letter-spacing: 0.05px;
  white-space: nowrap;
  div:first-child { font-size: 19.2px; line-height: 25px; }
`;

export default function App() {
  return (
    <Screen>
      <Global />
      <Ribbon />
      <Workspace>
        <Projects />
        <Editor>
          <DocTabs>
            <DocTab $w={39}>
              <svg width="12" height="12" viewBox="0 0 12 12"><path d="M6 .5L.5 6H2V11.5H4.8V8H7.2V11.5H10V6H11.5Z" fill="#2673b4" /></svg>Start
            </DocTab>
            <DocTab $w={99} $active><PcbIcon />ELS_Boost.CMPcbDoc</DocTab>
            <DocTab $w={95}><SchIcon />ELS_Boost.SchDoc</DocTab>
          </DocTabs>
          <Canvas>
            <Board />
            <DrillDialog />
          </Canvas>
        </Editor>
      </Workspace>
      <Shade />
      <Subtitle>esto está activado y también en las posiciones de coordenadas queremos hacer referencia</Subtitle>
      <Activation>
        <div>Activate Windows</div>
        <div>Go to Settings to activate Windows.</div>
      </Activation>
    </Screen>
  );
}
